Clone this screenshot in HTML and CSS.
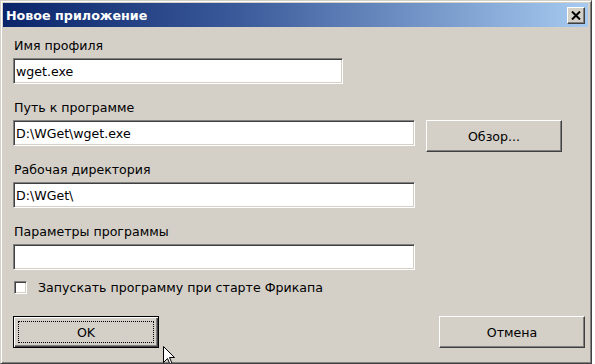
FILE: index.html
```html
<!DOCTYPE html>
<html lang="ru">
<head>
<meta charset="utf-8">
<title>Новое приложение</title>
<link rel="stylesheet" href="styles.css">
</head>
<body>
<div class="window">
  <div class="titlebar">
    <span class="title">Новое приложение</span>
    <div class="close">
      <svg width="10" height="9" viewBox="0 0 10 9"><path d="M1 0.5 L9 8.5 M9 0.5 L1 8.5" stroke="#000" stroke-width="2" fill="none"/></svg>
    </div>
  </div>
  <div class="content">
    <div class="label first">Имя профиля</div>
    <div class="field short">wget.exe</div>

    <div class="label">Путь к программе</div>
    <div class="row">
      <div class="field long">D:\WGet\wget.exe</div>
      <div class="btn browse">Обзор...</div>
    </div>

    <div class="label after-row">Рабочая директория</div>
    <div class="field long">D:\WGet\</div>

    <div class="label">Параметры программы</div>
    <div class="field long"></div>

    <div class="check">
      <span class="box"></span>
      <span>Запускать программу при старте Фрикапа</span>
    </div>

    <div class="actions">
      <div class="btn action default"><span class="focus">OK</span></div>
      <div class="btn action">Отмена</div>
    </div>
  </div>
  <svg class="cursor" width="13" height="21" viewBox="0 0 13 21"><path d="M0.5 0.5 L0.5 16.5 L4.5 12.5 L7.5 19.5 L9.5 18.5 L6.5 11.5 L11.5 11.5 Z" fill="#fff" stroke="#000" stroke-width="1"/></svg>
</div>
</body>
</html>
```

FILE: styles.css
```css
html, body {
  margin: 0;
  padding: 0;
  background: #ffffff;
}

body {
  font-family: "DejaVu Sans", "Liberation Sans", sans-serif;
  font-size: 12.6px;
  color: #000;
}

.window {
  position: relative;
  width: 592px;
  height: 364px;
  box-sizing: border-box;
  background: #d4d0c8;
  border: 1px solid;
  border-color: #d4d0c8 #404040 #404040 #d4d0c8;
  box-shadow: inset 1px 1px #ffffff, inset -1px -1px #808080;
  padding: 2px 3px 2px 2px;
  overflow: hidden;
}

.titlebar {
  height: 24px;
  display: flex;
  align-items: center;
  justify-content: space-between;
  background: linear-gradient(to right, #0a246a 0%, #3a5a9a 40%, #a6caf0 100%);
  padding: 0 3px 0 3px;
}

.title {
  color: #fff;
  font-weight: bold;
  font-size: 12.7px;
}

.close {
  width: 18px;
  height: 17px;
  box-sizing: border-box;
  background: #d4d0c8;
  border: 1px solid;
  border-color: #ffffff #404040 #404040 #ffffff;
  box-shadow: inset -1px -1px #808080;
  display: flex;
  align-items: center;
  justify-content: center;
}

.content {
  display: flex;
  flex-direction: column;
  align-items: flex-start;
  padding: 11px 3px 0 10px;
}

.label {
  height: 16px;
  line-height: 16px;
  margin-top: 16px;
  margin-bottom: 4px;
  padding-left: 1px;
}

.label.first {
  margin-top: 0;
}

.label.after-row {
  margin-top: 10px;
}

.field {
  height: 26px;
  box-sizing: border-box;
  background: #fff;
  border: 1px solid;
  border-color: #808080 #ffffff #ffffff #808080;
  box-shadow: inset 1px 1px #404040, inset -1px -1px #d4d0c8;
  display: flex;
  align-items: center;
  padding-left: 2px;
  white-space: nowrap;
}

.field.short {
  width: 330px;
}

.field.long {
  width: 402px;
}

.row {
  display: flex;
  align-items: flex-start;
  gap: 11px;
}

.btn {
  box-sizing: border-box;
  background: #d4d0c8;
  border: 1px solid;
  border-color: #ffffff #404040 #404040 #ffffff;
  box-shadow: inset -1px -1px #808080;
  display: flex;
  align-items: center;
  justify-content: center;
  height: 32px;
}

.browse {
  width: 136px;
}

.check {
  display: flex;
  align-items: center;
  gap: 11px;
  height: 16px;
  margin-top: 9px;
  padding-left: 1px;
}

.box {
  width: 13px;
  height: 13px;
  box-sizing: border-box;
  background: #fff;
  border: 1px solid;
  border-color: #808080 #ffffff #ffffff #808080;
  box-shadow: inset 1px 1px #404040, inset -1px -1px #d4d0c8;
}

.actions {
  align-self: stretch;
  display: flex;
  justify-content: space-between;
  margin-top: 21px;
}

.action {
  width: 146px;
}

.btn.default {
  border: 1px solid #000;
  box-shadow: inset 1px 1px #ffffff, inset -1px -1px #404040, inset -2px -2px #808080;
  padding: 4px;
  align-items: stretch;
}

.focus {
  flex: 1;
  border: 1px dotted #000;
  display: flex;
  align-items: center;
  justify-content: center;
}

.cursor {
  position: absolute;
  left: 162px;
  top: 345px;
}
```
